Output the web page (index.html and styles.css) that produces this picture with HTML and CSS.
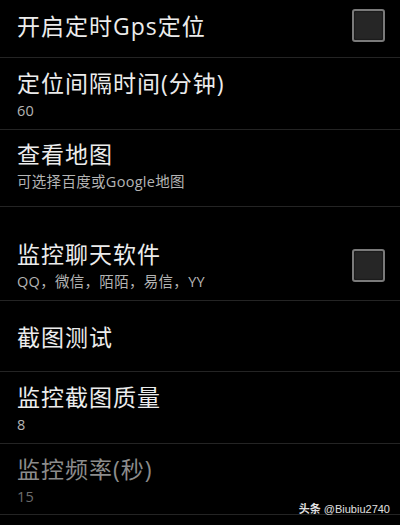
FILE: index.html
```html
<!DOCTYPE html>
<html lang="zh-CN">
<head>
<meta charset="utf-8">
<link rel="stylesheet" href="styles.css">
</head>
<body>
<div class="screen">
  <div class="row r1">
    <div class="content">
      <div class="text"><div class="title">开启定时Gps定位</div></div>
      <div class="checkbox"></div>
    </div>
  </div>
  <div class="row r2">
    <div class="content">
      <div class="text"><div class="title">定位间隔时间(分钟)</div><div class="sub">60</div></div>
    </div>
  </div>
  <div class="row r3">
    <div class="content">
      <div class="text"><div class="title">查看地图</div><div class="sub">可选择百度或Google地图</div></div>
    </div>
  </div>
  <div class="row r4">
    <div class="content">
      <div class="text"><div class="title">监控聊天软件</div><div class="sub">QQ，微信，陌陌，易信，YY</div></div>
      <div class="checkbox"></div>
    </div>
  </div>
  <div class="row r5">
    <div class="content">
      <div class="text"><div class="title">截图测试</div></div>
    </div>
  </div>
  <div class="row r6">
    <div class="content">
      <div class="text"><div class="title">监控截图质量</div><div class="sub">8</div></div>
    </div>
  </div>
  <div class="row r7 disabled">
    <div class="content">
      <div class="text"><div class="title">监控频率(秒)</div><div class="sub">15</div></div>
    </div>
  </div>
  <div class="watermark"><span class="wm-brand">头条</span> @Biubiu2740</div>
</div>
</body>
</html>
```
FILE: styles.css
```css
html, body {
  margin: 0;
  padding: 0;
  background: #000;
}
.screen {
  position: relative;
  width: 400px;
  height: 525px;
  overflow: hidden;
  background: #000;
  font-family: "Open Sans", "Noto Sans CJK SC", sans-serif;
}
.row {
  box-sizing: border-box;
  border-bottom: 1px solid #242424;
  padding-left: 17px;
  padding-right: 15px;
}
.content {
  display: flex;
  align-items: center;
  justify-content: space-between;
}
.text {
  display: flex;
  flex-direction: column;
}
.title {
  font-size: 23px;
  line-height: 28px;
  color: #ececec;
  letter-spacing: 1px;
}
.sub {
  font-size: 14.5px;
  line-height: 18px;
  color: #b4b4b4;
  margin-top: 5px;
  letter-spacing: 0.3px;
}
.r1 { height: 58px; padding-top: 9px; }
.r2 { height: 72px; padding-top: 11px; }
.r3 { height: 77px; padding-top: 10px; }
.r4 { height: 94px; padding-top: 33px; }
.r5 { height: 71px; padding-top: 22px; }
.r6 { height: 72px; padding-top: 11px; }
.r7 { height: 71px; padding-top: 11px; }
.disabled .title { color: #8c8c8c; }
.disabled .sub { color: #6e6e6e; }
.checkbox {
  box-sizing: border-box;
  width: 33px;
  height: 33px;
  border: 2px solid #7a7a7a;
  border-radius: 3px;
  background: #262626;
  box-shadow: inset 0 0 2px #000;
}
.watermark {
  position: absolute;
  right: 10px;
  top: 502px;
  font-size: 11px;
  line-height: 14px;
  color: #e0e0e0;
  font-family: "Liberation Sans", "Noto Sans CJK SC", sans-serif;
}
.wm-brand {
  font-weight: bold;
}
```
